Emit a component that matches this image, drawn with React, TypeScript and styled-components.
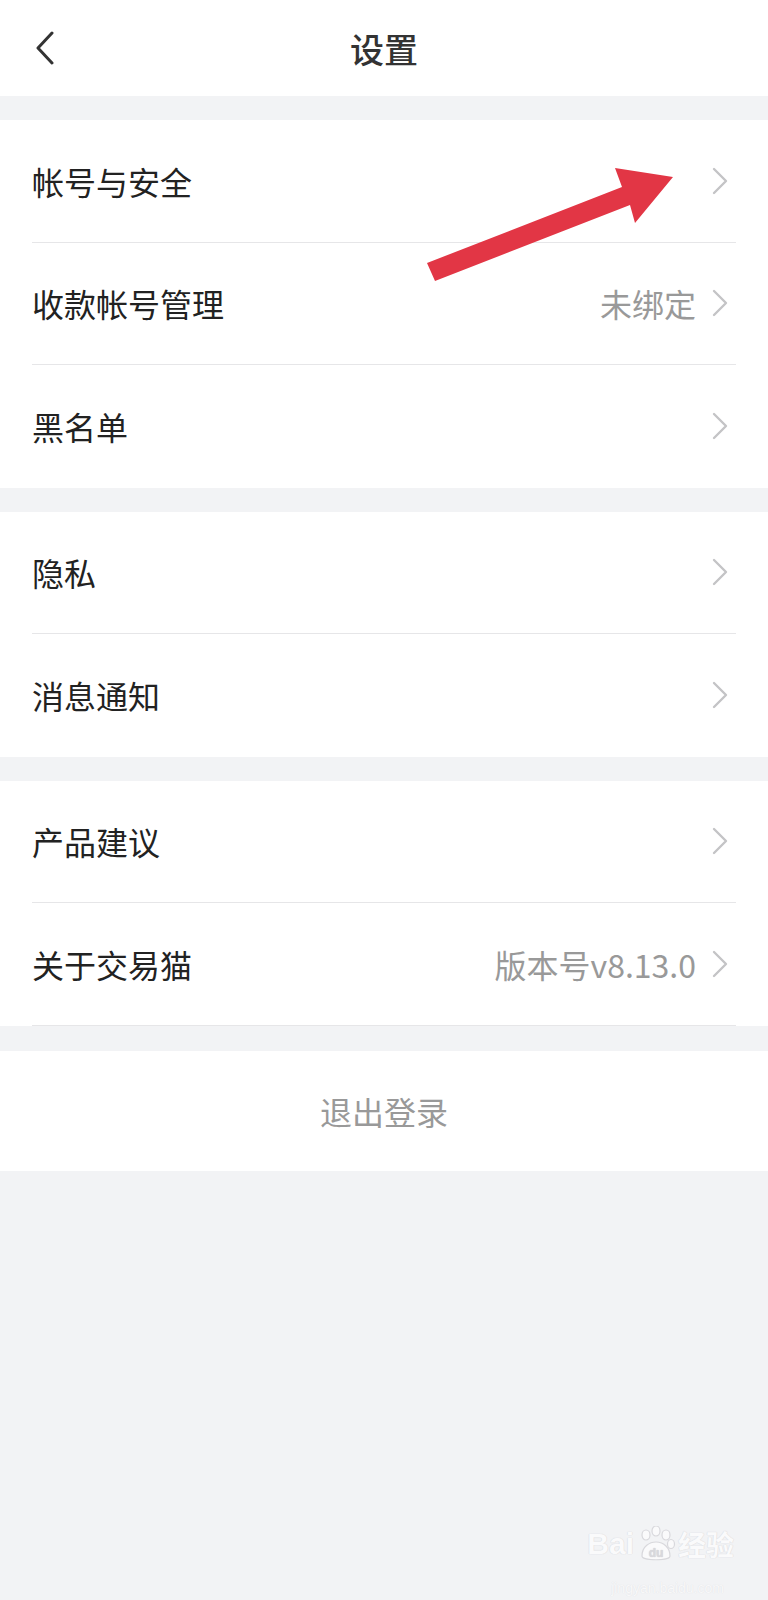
import styled, { createGlobalStyle } from "styled-components";

const GlobalStyle = createGlobalStyle`
	body {
		margin: 0;
		background: #f2f3f5;
		font-family: "Noto Sans CJK SC", "Noto Sans", sans-serif;
	}
`;

const Page = styled.div`
	position: relative;
	min-height: 1600px;
	background: #f2f3f5;
	overflow: hidden;
`;

const Header = styled.header`
	height: 96px;
	background: #fff;
	display: grid;
	grid-template-columns: 96px 1fr 96px;
	align-items: center;
`;

const BackButton = styled.button`
	border: none;
	background: none;
	padding: 0 0 0 34px;
	height: 96px;
	display: flex;
	align-items: center;
	cursor: pointer;
`;

const Title = styled.h1`
	margin: 0;
	text-align: center;
	font-size: 34px;
	font-weight: 500;
	color: #333;
`;

const Section = styled.section`
	margin-top: 24px;
	background: #fff;
`;

const Row = styled.div`
	padding: 0 32px;
`;

const RowInner = styled.div<{ $divider?: boolean }>`
	height: ${(p) => (p.$divider ? 121.5 : 122.5)}px;
	display: flex;
	align-items: center;
	border-bottom: ${(p) => (p.$divider ? "1px solid #e6e6e8" : "none")};
`;

const Label = styled.span`
	flex: 1;
	font-size: 32px;
	color: #222;
`;

const Value = styled.span`
	font-size: 32px;
	color: #999;
	margin-right: 16px;
`;

const Chevron = styled.svg`
	width: 16px;
	height: 28px;
	margin-right: 8px;
	flex-shrink: 0;
`;

const Logout = styled.button`
	display: block;
	width: 100%;
	margin-top: 25px;
	height: 120px;
	border: none;
	background: #fff;
	font-family: inherit;
	font-size: 32px;
	color: #999;
	cursor: pointer;
`;

const Annotation = styled.svg`
	position: absolute;
	left: 0;
	top: 0;
	pointer-events: none;
`;

const Watermark = styled.div`
	position: absolute;
	right: 34px;
	bottom: 36px;
	display: flex;
	align-items: center;
	gap: 2px;
	font-family: "Liberation Sans", sans-serif;
	font-weight: 700;
	font-size: 30px;
	color: #fafafb;
	text-shadow: 0 0 1px #d8d8dc, 0 0 1px #d8d8dc;
`;

const WatermarkCn = styled.span`
	font-family: "Noto Sans CJK SC", sans-serif;
	font-size: 28px;
`;

const WatermarkUrl = styled.div`
	position: absolute;
	right: 44px;
	bottom: 4px;
	font-family: "Liberation Sans", sans-serif;
	font-size: 14px;
	color: #f8f8f9;
	text-shadow: 0 0 1px #dcdce0;
`;

type Item = { label: string; value?: string };

const sections: Item[][] = [
	[{ label: "帐号与安全" }, { label: "收款帐号管理", value: "未绑定" }, { label: "黑名单" }],
	[{ label: "隐私" }, { label: "消息通知" }],
	[{ label: "产品建议" }, { label: "关于交易猫", value: "版本号v8.13.0" }],
];

function Arrow() {
	return (
		<Chevron viewBox="0 0 16 28">
			<path d="M2 2 L14 14 L2 26" fill="none" stroke="#c4c4c6" strokeWidth="2.4" strokeLinecap="round" strokeLinejoin="round" />
		</Chevron>
	);
}

export default function App() {
	return (
		<Page>
			<GlobalStyle />
			<Header>
				<BackButton aria-label="返回">
					<svg width="22" height="34" viewBox="0 0 22 34">
						<path d="M18 2 L4 17 L18 32" fill="none" stroke="#333" strokeWidth="3" strokeLinecap="round" strokeLinejoin="round" />
					</svg>
				</BackButton>
				<Title>设置</Title>
				<span />
			</Header>

			{sections.map((items, si) => (
				<Section key={si}>
					{items.map((item, i) => (
						<Row key={item.label}>
							<RowInner $divider={i < items.length - 1 || si === sections.length - 1}>
								<Label>{item.label}</Label>
								{item.value && <Value>{item.value}</Value>}
								<Arrow />
							</RowInner>
						</Row>
					))}
				</Section>
			))}

			<Logout>退出登录</Logout>

			<Annotation width="768" height="320" viewBox="0 0 768 320">
				<polygon
					points="427,263 622,187 615,168 673,177 635,223 630,205 435,281"
					fill="#e23645"
				/>
			</Annotation>

			<Watermark>
				<span>Bai</span>
				<svg width="40" height="36" viewBox="0 0 40 36">
					<g fill="#fafafb" stroke="#d8d8dc" strokeWidth="1.2">
						<ellipse cx="10" cy="9" rx="4" ry="5" />
						<ellipse cx="20" cy="5" rx="4" ry="5" />
						<ellipse cx="30" cy="9" rx="4" ry="5" />
						<ellipse cx="35" cy="18" rx="3.5" ry="4.5" />
						<path d="M6 30 C6 20 14 16 20 16 C28 16 34 22 34 30 C34 35 6 35 6 30 Z" />
					</g>
					<text x="20" y="31" textAnchor="middle" fontSize="12" fontWeight="700" fill="#d8d8dc" stroke="none" fontFamily="Liberation Sans">du</text>
				</svg>
				<WatermarkCn>经验</WatermarkCn>
			</Watermark>
			<WatermarkUrl>jingyan.baidu.com</WatermarkUrl>
		</Page>
	);
}
